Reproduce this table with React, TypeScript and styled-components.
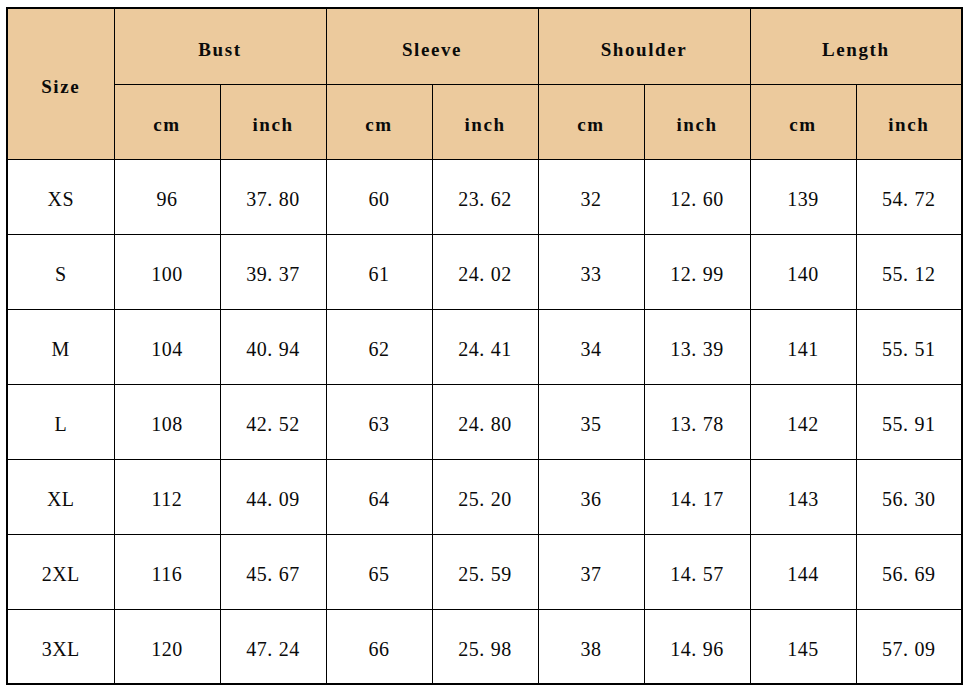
import styled, { createGlobalStyle } from "styled-components";

const GlobalStyle = createGlobalStyle`
  html, body {
    margin: 0;
    background: #ffffff;
  }
`;

const groups = ["Bust", "Sleeve", "Shoulder", "Length"];

const rows: string[][] = [
  ["XS", "96", "37.80", "60", "23.62", "32", "12.60", "139", "54.72"],
  ["S", "100", "39.37", "61", "24.02", "33", "12.99", "140", "55.12"],
  ["M", "104", "40.94", "62", "24.41", "34", "13.39", "141", "55.51"],
  ["L", "108", "42.52", "63", "24.80", "35", "13.78", "142", "55.91"],
  ["XL", "112", "44.09", "64", "25.20", "36", "14.17", "143", "56.30"],
  ["2XL", "116", "45.67", "65", "25.59", "37", "14.57", "144", "56.69"],
  ["3XL", "120", "47.24", "66", "25.98", "38", "14.96", "145", "57.09"],
];

// the source font gives the decimal point a full-width cell
function Value({ v }: { v: string }) {
  const [whole, frac] = v.split(".");
  if (frac === undefined) return <>{v}</>;
  return <>{whole}<Dot>.</Dot>{frac}</>;
}

export default function App(): JSX.Element {
  return (
    <Page>
      <GlobalStyle />
      <SizeTable>
        <colgroup>
          <col style={{ width: 107 }} />
          {Array.from({ length: 8 }).map((_, i) => <col key={i} style={{ width: 106 }} />)}
        </colgroup>
        <thead>
          <GroupRow>
            <HeadCell rowSpan={2}>Size</HeadCell>
            {groups.map((g) => <HeadCell key={g} colSpan={2}>{g}</HeadCell>)}
          </GroupRow>
          <UnitRow>
            {groups.map((g) => [
              <HeadCell key={g + "cm"}>cm</HeadCell>,
              <HeadCell key={g + "inch"}>inch</HeadCell>,
            ])}
          </UnitRow>
        </thead>
        <tbody>
          {rows.map((r) => (
            <DataRow key={r[0]}>
              {r.map((v, i) => <DataCell key={i}><Value v={v} /></DataCell>)}
            </DataRow>
          ))}
        </tbody>
      </SizeTable>
    </Page>
  );
}

const Page = styled.div`
  padding: 7px 0 0 6px;
`;

const SizeTable = styled.table`
  border-collapse: collapse;
  table-layout: fixed;
  width: 956px;
  border: 2px solid #000;
  font-family: "Liberation Serif", "DejaVu Serif", serif;
  color: #0a0a0a;
`;

const GroupRow = styled.tr`
  height: 76px;
`;

const UnitRow = styled.tr`
  height: 75px;
`;

const DataRow = styled.tr`
  height: 75px;
`;

const HeadCell = styled.th`
  border: 1px solid #000;
  background: #ecca9d;
  font-size: 19px;
  font-weight: bold;
  letter-spacing: 1.6px;
  text-align: center;
  vertical-align: middle;
  padding: 7px 0 0;
`;

const DataCell = styled.td`
  border: 1px solid #000;
  background: #ffffff;
  font-size: 20px;
  font-weight: normal;
  letter-spacing: 0.5px;
  text-align: center;
  vertical-align: middle;
  padding: 6px 0 0;
`;

const Dot = styled.span`
  padding-right: 6px;
`;
